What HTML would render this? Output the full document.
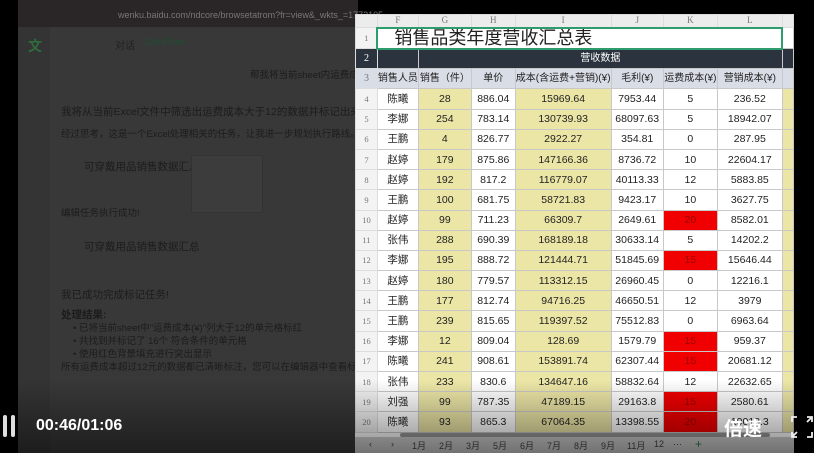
<!DOCTYPE html>
<html><head><meta charset="utf-8"><style>
*{margin:0;padding:0;box-sizing:border-box}
body{width:814px;height:453px;overflow:hidden;background:#000;position:relative;font-family:"Liberation Sans","Noto Sans CJK SC",sans-serif}
.app{position:absolute;left:18px;top:0;width:340px;height:453px;background:#383838}
.topbar{position:absolute;left:0;top:0;width:340px;height:27px;background:#2a2526}
.side{position:absolute;left:0;top:27px;width:32px;height:426px;background:#343434}
.t{position:absolute;color:#1c1c1c;font-size:9.5px;white-space:nowrap}
.sheet{position:absolute;left:355px;top:14px;width:439px;height:439px;background:#fff}
table{border-collapse:collapse;table-layout:fixed;position:absolute;left:0;top:0}
td{border:1px solid #c8c8c8;text-align:center;font-size:10.5px;line-height:12px;color:#222;height:20.2px;padding:0;white-space:nowrap;overflow:hidden;font-family:"Liberation Sans","Noto Sans CJK SC",sans-serif}
td.rn{background:#f3f3f3;color:#777;font-size:8.5px;font-family:"Liberation Serif",serif;border-color:#ddd}
tr.col td{height:13px;line-height:11px;background:#ececec;color:#777;font-size:9px;font-family:"Liberation Serif",serif;border-color:#ddd}
.y{background:#ece6a6}
.r{background:#f00000;color:#9a0000}
tr.h3 td{background:#d9dde6;font-size:10px}
tr.h2 td{background:#2b343e;color:#fff;font-size:10px}
.bot{position:absolute;left:0;top:380px;width:814px;height:73px;background:linear-gradient(rgba(0,0,0,0),rgba(0,0,0,.45))}
.tabs{position:absolute;left:355px;top:437px;width:439px;height:16px;background:#cfcfcf;font-size:9px;color:#444}
.tabs span{position:absolute;top:2px}
</style></head><body>
<div class="app">
<div class="topbar"><div class="t" style="left:100px;top:10px;color:#777;font-size:9px">wenku.baidu.com/ndcore/browsetatrom?fr=view&amp;_wkts_=1772105</div></div>
<div class="side"></div>
<div class="t" style="left:10px;top:36px;color:#2e6d3e;font-size:14px;font-weight:bold">文</div>
<div class="t" style="left:97px;top:37px;color:#222;font-size:10px">对话</div>
<div class="t" style="left:127px;top:37px;color:#1e4d33;font-size:10px">GenFlow</div>
<div class="t" style="left:232px;top:67px">帮我将当前sheet内运费成本大于</div>
<div class="t" style="left:43px;top:104px;font-size:10.5px">我将从当前Excel文件中筛选出运费成本大于12的数据并标记出来。</div>
<div class="t" style="left:43px;top:126px">经过思考，这是一个Excel处理相关的任务，让我进一步规划执行路线。</div>
<div class="t" style="left:66px;top:159px;font-size:10.5px">可穿戴用品销售数据汇总</div>
<div class="t" style="left:43px;top:205px">编辑任务执行成功!</div>
<div class="t" style="left:66px;top:239px;font-size:10.5px">可穿戴用品销售数据汇总</div>
<div class="t" style="left:43px;top:287px;font-size:10.5px">我已成功完成标记任务!</div>
<div class="t" style="left:43px;top:307px;font-weight:bold;font-size:10.5px">处理结果:</div>
<div class="t" style="left:55px;top:320px">• 已将当前sheet中"运费成本(¥)"列大于12的单元格标红</div>
<div class="t" style="left:55px;top:333px">• 共找到并标记了 16个 符合条件的单元格</div>
<div class="t" style="left:55px;top:346px">• 使用红色背景填充进行突出显示</div>
<div class="t" style="left:43px;top:359px">所有运费成本超过12元的数据都已清晰标注，您可以在编辑器中查看标红效果。</div>
<div style="position:absolute;left:173px;top:155px;width:72px;height:58px;background:#3c3c3c;border:1px solid #333"></div>
</div>
<div class="sheet">
<table>
<colgroup><col style="width:23px"><col style="width:40px"><col style="width:53px"><col style="width:45px"><col style="width:93px"><col style="width:53px"><col style="width:54px"><col style="width:66px"><col style="width:12px"></colgroup>
<tr class="col"><td></td><td>F</td><td>G</td><td>H</td><td>I</td><td>J</td><td>K</td><td>L</td><td></td></tr>
<tr><td class="rn" style="height:21px">1</td><td colspan="7" style="text-align:left;padding-left:16px;font-size:18px;line-height:17px;border:2px solid #2e9d6e;height:21px">销售品类年度营收汇总表</td><td></td></tr>
<tr class="h2"><td class="rn">2</td><td></td><td colspan="6">营收数据</td><td></td></tr>
<tr class="h3"><td class="rn">3</td><td>销售人员</td><td>销售（件）</td><td>单价</td><td>成本(含运费+营销)(¥)</td><td>毛利(¥)</td><td>运费成本(¥)</td><td>营销成本(¥)</td><td></td></tr>
<tr><td class="rn">4</td><td>陈曦</td><td class="y">28</td><td>886.04</td><td class="y">15969.64</td><td>7953.44</td><td>5</td><td>236.52</td><td class="y"></td></tr>
<tr><td class="rn">5</td><td>李娜</td><td class="y">254</td><td>783.14</td><td class="y">130739.93</td><td>68097.63</td><td>5</td><td>18942.07</td><td class="y"></td></tr>
<tr><td class="rn">6</td><td>王鹏</td><td class="y">4</td><td>826.77</td><td class="y">2922.27</td><td>354.81</td><td>0</td><td>287.95</td><td class="y"></td></tr>
<tr><td class="rn">7</td><td>赵婷</td><td class="y">179</td><td>875.86</td><td class="y">147166.36</td><td>8736.72</td><td>10</td><td>22604.17</td><td class="y"></td></tr>
<tr><td class="rn">8</td><td>赵婷</td><td class="y">192</td><td>817.2</td><td class="y">116779.07</td><td>40113.33</td><td>12</td><td>5883.85</td><td class="y"></td></tr>
<tr><td class="rn">9</td><td>王鹏</td><td class="y">100</td><td>681.75</td><td class="y">58721.83</td><td>9423.17</td><td>10</td><td>3627.75</td><td class="y"></td></tr>
<tr><td class="rn">10</td><td>赵婷</td><td class="y">99</td><td>711.23</td><td class="y">66309.7</td><td>2649.61</td><td class="r">20</td><td>8582.01</td><td class="y"></td></tr>
<tr><td class="rn">11</td><td>张伟</td><td class="y">288</td><td>690.39</td><td class="y">168189.18</td><td>30633.14</td><td>5</td><td>14202.2</td><td class="y"></td></tr>
<tr><td class="rn">12</td><td>李娜</td><td class="y">195</td><td>888.72</td><td class="y">121444.71</td><td>51845.69</td><td class="r">15</td><td>15646.44</td><td class="y"></td></tr>
<tr><td class="rn">13</td><td>赵婷</td><td class="y">180</td><td>779.57</td><td class="y">113312.15</td><td>26960.45</td><td>0</td><td>12216.1</td><td class="y"></td></tr>
<tr><td class="rn">14</td><td>王鹏</td><td class="y">177</td><td>812.74</td><td class="y">94716.25</td><td>46650.51</td><td>12</td><td>3979</td><td class="y"></td></tr>
<tr><td class="rn">15</td><td>王鹏</td><td class="y">239</td><td>815.65</td><td class="y">119397.52</td><td>75512.83</td><td>0</td><td>6963.64</td><td class="y"></td></tr>
<tr><td class="rn">16</td><td>李娜</td><td class="y">12</td><td>809.04</td><td class="y">128.69</td><td>1579.79</td><td class="r">15</td><td>959.37</td><td class="y"></td></tr>
<tr><td class="rn">17</td><td>陈曦</td><td class="y">241</td><td>908.61</td><td class="y">153891.74</td><td>62307.44</td><td class="r">15</td><td>20681.12</td><td class="y"></td></tr>
<tr><td class="rn">18</td><td>张伟</td><td class="y">233</td><td>830.6</td><td class="y">134647.16</td><td>58832.64</td><td>12</td><td>22632.65</td><td class="y"></td></tr>
<tr><td class="rn">19</td><td>刘强</td><td class="y">99</td><td>787.35</td><td class="y">47189.15</td><td>29163.8</td><td class="r">15</td><td>2580.61</td><td class="y"></td></tr>
<tr><td class="rn">20</td><td>陈曦</td><td class="y">93</td><td>865.3</td><td class="y">67064.35</td><td>13398.55</td><td class="r">20</td><td>19018.3</td><td class="y"></td></tr>
</table>
<div style="position:absolute;left:45px;top:419px;width:370px;height:4px;background:#999;border-radius:2px"></div>
</div>
<div class="tabs"><span style="left:14px">‹</span><span style="left:36px">›</span><span style="left:57px">1月</span><span style="left:84px">2月</span><span style="left:111px">3月</span><span style="left:138px">5月</span><span style="left:165px">6月</span><span style="left:192px">7月</span><span style="left:219px">8月</span><span style="left:246px">9月</span><span style="left:272px">11月</span><span style="left:299px">12</span><span style="left:318px">···</span><span style="left:340px;color:#2e7d4e;font-size:12px;top:0">+</span></div>
<div class="bot"></div>
<div style="position:absolute;left:3px;top:415px;width:4px;height:22px;background:#ddd;border-radius:2px"></div>
<div style="position:absolute;left:11px;top:415px;width:4px;height:22px;background:#ddd;border-radius:2px"></div>
<div style="position:absolute;left:36px;top:417px;color:#fff;font-size:16px;font-weight:bold">00:46/01:06</div>
<div style="position:absolute;left:724px;top:414px;color:#fff;font-size:19px;font-weight:bold">倍速</div>
<svg style="position:absolute;left:790px;top:415px" width="24" height="24" viewBox="0 0 24 24" fill="none" stroke="#eee" stroke-width="1.8"><path d="M2 7V2h5M22 7V2h-5M2 17v5h5M22 17v5h-5M17 7l4-4M7 17l-4 4"/></svg>
</body></html>
